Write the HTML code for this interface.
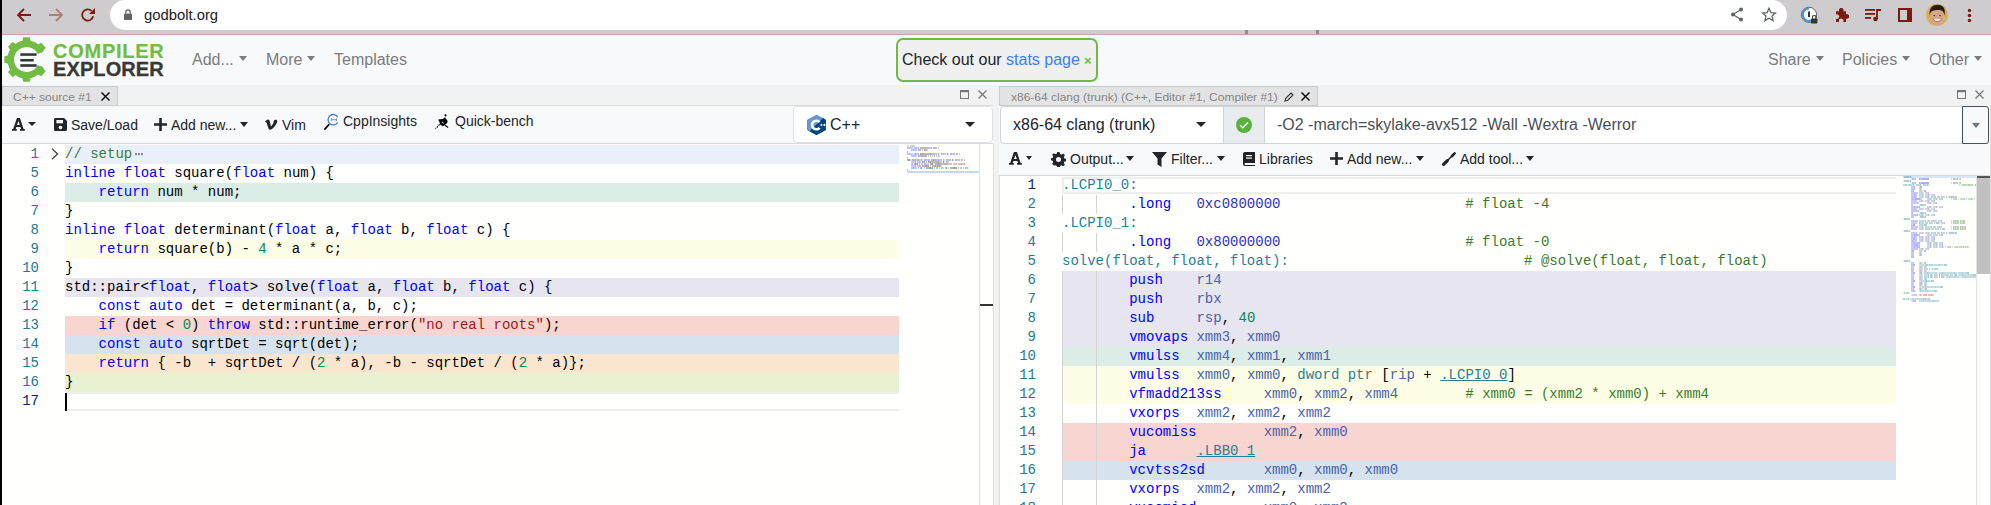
<!DOCTYPE html>
<html><head><meta charset="utf-8">
<style>
*{box-sizing:border-box}
html,body{margin:0;padding:0;width:1991px;height:505px;overflow:hidden;background:#fffffe;font-family:"Liberation Sans",sans-serif}
.a{position:absolute}
svg.a{z-index:6}
#lborder{position:absolute;left:0;top:0;width:2px;height:505px;background:#000;z-index:50}
#chrome{position:absolute;left:0;top:0;width:1991px;height:35px;background:#cecccf;border-bottom:1px solid #c9a5a5}
#pill{position:absolute;left:110px;top:0px;width:1677px;height:30px;background:#fefefe;border-radius:15px}
#url{position:absolute;left:144px;top:6.5px;font-size:14.8px;color:#202124;letter-spacing:0px}
#header{position:absolute;left:0;top:35px;width:1991px;height:50px;background:#f8f9fa}
.nav{position:absolute;top:50px;font-size:16px;color:#7b7c7d;line-height:19px}
.caret{display:inline-block;width:0;height:0;border-left:4.5px solid transparent;border-right:4.5px solid transparent;border-top:5px solid #7b7c7d;vertical-align:middle;margin-left:5px;position:relative;top:-2px}
#tabbar{position:absolute;left:0;top:85px;width:1991px;height:21px;background:#f2f2f2}
.tab{position:absolute;top:86px;height:20px;z-index:5;background:#e3e3e3;border:1px solid #cbcbcb;font-size:12px;color:#858585;line-height:21px}
.tab span{display:inline-block;transform:scaleY(.9);transform-origin:0 15px}
.tbar{position:absolute;background:#f8f9fa;border-bottom:1px solid #dadada}
.btn{position:absolute;font-size:14px;color:#212529;line-height:16px}
.code{position:absolute;background:#fffffe}
.bg{position:absolute;height:19px}
.ln{position:absolute;height:19px;font:14px/19px "Liberation Mono",monospace;color:#237893;text-align:right}
.ln.act{color:#0b216f}
.cl{position:absolute;height:19px;font:14px/19px "Liberation Mono",monospace;color:#000;white-space:pre}
.k{color:#0000ff}.h{color:#3030c0}.n{color:#098658}.s{color:#a31515}.c{color:#387d2c}.r{color:#4864aa}.l{color:#267f99}.p{color:#000}.u{color:#267f99;text-decoration:underline}
.acaret{position:absolute;width:0;height:0;border-left:4.5px solid transparent;border-right:4.5px solid transparent;border-top:5px solid #7b7c7d}
.fold{color:#888;font-size:11px;position:relative;top:-1px;margin-left:2px}
</style></head><body>
<div id="lborder"></div>
<!-- browser chrome -->
<div id="chrome">
  <svg class="a" style="left:16px;top:7px" width="16" height="16" viewBox="0 0 16 16"><path d="M15 8H2.5M8 2L2 8l6 6" fill="none" stroke="#7a1a0e" stroke-width="1.8"/></svg>
  <svg class="a" style="left:48px;top:7px" width="16" height="16" viewBox="0 0 16 16"><path d="M1 8h12.5M8 2l6 6-6 6" fill="none" stroke="#b27c75" stroke-width="1.8"/></svg>
  <svg class="a" style="left:80px;top:7px" width="16" height="16" viewBox="0 0 16 16"><path d="M13.2 9.2A5.6 5.6 0 1 1 11.6 3.9" fill="none" stroke="#7a1a0e" stroke-width="1.8"/><path d="M15 1v6H9z" fill="#7a1a0e"/></svg>
  <div id="pill"></div><div class="a" style="left:1245px;top:30px;width:3px;height:4px;background:#8e8c90"></div><div class="a" style="left:1316px;top:30px;width:3px;height:4px;background:#8e8c90"></div>
  <svg class="a" style="left:123px;top:8px" width="10" height="13" viewBox="0 0 10 13"><rect x="1" y="5.5" width="8" height="6.5" rx="0.8" fill="#5f6368"/><path d="M2.8 5.5V4a2.2 2.2 0 0 1 4.4 0v1.5" fill="none" stroke="#5f6368" stroke-width="1.3"/></svg>
  <div id="url">godbolt.org</div>
  <svg class="a" style="left:1730px;top:7px" width="14" height="15" viewBox="0 0 14 15"><circle cx="11" cy="2.5" r="2" fill="#5f6368"/><circle cx="3" cy="7.5" r="2" fill="#5f6368"/><circle cx="11" cy="12.5" r="2" fill="#5f6368"/><path d="M11 2.5L3 7.5l8 5" fill="none" stroke="#5f6368" stroke-width="1.2"/></svg>
  <svg class="a" style="left:1761px;top:7px" width="16" height="15" viewBox="0 0 24 23"><path d="M12 2l2.9 6.6 7.1.6-5.4 4.7 1.6 7-6.2-3.7-6.2 3.7 1.6-7L2 9.2l7.1-.6z" fill="none" stroke="#5f6368" stroke-width="2"/></svg>
  <svg class="a" style="left:1800px;top:6px" width="18" height="18" viewBox="0 0 18 18"><circle cx="9" cy="8.8" r="7.6" fill="#fff" stroke="#555" stroke-width="0.9"/><path d="M9 2.6A6.2 6.2 0 1 0 13.5 13" fill="none" stroke="#4a90f0" stroke-width="2"/><rect x="8" y="5.5" width="2" height="5.5" fill="#333"/><rect x="11" y="12.4" width="6.4" height="5" rx="0.9" fill="#333"/><path d="M12.4 12.4v-1.1a1.8 1.8 0 0 1 3.6 0v1.1" stroke="#333" stroke-width="1.1" fill="none"/></svg>
  <svg class="a" style="left:1834px;top:8px" width="15" height="15" viewBox="0 0 15 15"><path d="M5.2 3.2a2.3 2.3 0 1 1 4.2 0H12v3.1a2.3 2.3 0 1 1 0 4.2V14H9.1a2.3 2.3 0 1 0-3.9 0H2v-3.3a2.3 2.3 0 1 0 0-4.2V3.2z" fill="#7a1a0e"/></svg>
  <svg class="a" style="left:1864px;top:7px" width="18" height="15" viewBox="0 0 18 15"><rect x="1" y="2" width="10" height="1.8" fill="#7a1a0e"/><rect x="1" y="6" width="10" height="1.8" fill="#7a1a0e"/><rect x="1" y="10" width="6" height="1.8" fill="#7a1a0e"/><path d="M13 2v10" stroke="#7a1a0e" stroke-width="1.8"/><circle cx="11.5" cy="12" r="2.3" fill="#7a1a0e"/><path d="M13 2h4v2h-4" fill="#7a1a0e"/></svg>
  <svg class="a" style="left:1898px;top:8px" width="14" height="14" viewBox="0 0 14 14"><rect x="1" y="1" width="12" height="12" fill="none" stroke="#7a1a0e" stroke-width="2"/><rect x="9" y="1" width="5" height="12" fill="#7a1a0e"/></svg>
  <svg class="a" style="left:1926px;top:4px" width="22" height="22" viewBox="0 0 22 22"><g><rect width="22" height="22" fill="#d4b15e"/><ellipse cx="11.2" cy="13" rx="6.6" ry="8.6" fill="#d9a58a"/><path d="M3.6 11.5C2.6 3 8 0.5 12 0.8 17.5 1.2 19.8 5 18.6 11.5 17.8 8 16.6 6.6 14.6 6.2 12 5.8 8 6.4 5.4 7.4 4.4 8.4 4 10 3.6 11.5z" fill="#2b1d14"/><ellipse cx="8.3" cy="11.6" rx="0.9" ry="0.7" fill="#3a2a20"/><ellipse cx="14" cy="11.6" rx="0.9" ry="0.7" fill="#3a2a20"/><path d="M7 15.2q4.2 4.6 8.4 0z" fill="#fff"/><path d="M6.6 14.8q4.6 5.6 9.2 0" stroke="#9a5a48" stroke-width="0.8" fill="none"/></g><circle cx="11" cy="11" r="14" stroke="#cecccf" stroke-width="6" fill="none"/></svg>
  <svg class="a" style="left:1967px;top:8px" width="5" height="15" viewBox="0 0 5 15"><circle cx="2.5" cy="2.5" r="1.7" fill="#7a1a0e"/><circle cx="2.5" cy="7.5" r="1.7" fill="#7a1a0e"/><circle cx="2.5" cy="12.5" r="1.7" fill="#7a1a0e"/></svg>
</div>
<!-- header -->
<div id="header">
  <svg class="a" style="left:0.7px;top:0" width="50" height="50" viewBox="0 0 50 50"><g fill="#72bc44"><path d="M20.8 9 L22.2 2.3 H28.8 L30.2 9z" transform="rotate(0 25.5 24.5)"/><path d="M20.8 9 L22.2 2.3 H28.8 L30.2 9z" transform="rotate(50 25.5 24.5)"/><path d="M20.8 9 L22.2 2.3 H28.8 L30.2 9z" transform="rotate(130 25.5 24.5)"/><path d="M20.8 9 L22.2 2.3 H28.8 L30.2 9z" transform="rotate(180 25.5 24.5)"/><path d="M20.8 9 L22.2 2.3 H28.8 L30.2 9z" transform="rotate(227 25.5 24.5)"/><path d="M20.8 9 L22.2 2.3 H28.8 L30.2 9z" transform="rotate(270 25.5 24.5)"/><path d="M20.8 9 L22.2 2.3 H28.8 L30.2 9z" transform="rotate(313 25.5 24.5)"/></g><path d="M39.7 17.6A15.8 15.8 0 1 0 39.7 31.4" fill="none" stroke="#72bc44" stroke-width="6.6"/><rect x="19.3" y="18.3" width="16.3" height="2.5" fill="#333"/><rect x="19.3" y="24" width="13.4" height="2.5" fill="#333"/><rect x="19.3" y="29.2" width="16.3" height="2.6" fill="#333"/></svg>
  <div class="a" style="left:53px;top:7px;font:bold 20px/19px 'Liberation Sans';color:#72bc44;letter-spacing:0.75px;-webkit-text-stroke:0.2px #72bc44">COMPILER</div>
  <div class="a" style="left:53px;top:25px;font:bold 20px/19px 'Liberation Sans';color:#383838;letter-spacing:0.1px;-webkit-text-stroke:0.3px #383838">EXPLORER</div>
</div>
<div class="nav" style="left:192px">Add...<span class="caret"></span></div>
<div class="nav" style="left:266px">More<span class="caret"></span></div>
<div class="nav" style="left:334px">Templates</div>
<div class="nav" style="left:1768px">Share<span class="caret"></span></div>
<div class="nav" style="left:1842px">Policies<span class="caret"></span></div>
<div class="nav" style="left:1929px">Other<span class="caret"></span></div>
<div class="a" style="left:896px;top:38px;width:202px;height:44px;border:2px solid #6fbb45;border-radius:7px;background:#f0f0f0"></div>
<div class="a" style="left:902px;top:50px;font-size:16px;line-height:19px;color:#212529">Check out our <span style="color:#3d7ef5">stats page</span></div>
<div class="a" style="left:1084px;top:53px;font-size:13px;line-height:15px;color:#6fbb45;font-weight:bold">×</div>

<!-- tab bar -->
<div id="tabbar"></div>
<div class="a" style="left:993px;top:85px;width:6px;height:420px;background:#f2f2f2"></div>

<!-- LEFT PANE -->
<div class="tab" style="left:2px;width:116px;padding-left:10px"><span>C++ source #1</span></div>
<svg class="a" style="left:101px;top:92px" width="9" height="9" viewBox="0 0 9 9"><path d="M.5.5l8 8M8.5.5l-8 8" stroke="#000" stroke-width="1.4"/></svg>
<svg class="a" style="left:960px;top:90px" width="9" height="9" viewBox="0 0 9 9"><rect x=".5" y=".5" width="8" height="8" fill="none" stroke="#777" stroke-width="1"/><rect x="0" y="0" width="9" height="2.2" fill="#777"/></svg>
<svg class="a" style="left:978px;top:90px" width="9" height="9" viewBox="0 0 9 9"><path d="M.5.5l8 8M8.5.5l-8 8" stroke="#777" stroke-width="1.2"/></svg>

<div class="tbar" style="left:2px;top:105px;width:991px;height:39px;border-top:1px solid #dcdcdc"></div>
<svg class="a" style="left:11.5px;top:118px" width="13" height="13" viewBox="0 0 13 13"><path fill-rule="evenodd" fill="#212529" d="M0 12.8H4.8V11H3.7L4.4 9H8.4L9.1 11H8V12.8H12.8V11H11.6L7.9 0H4.9L1.2 11H0z M5 7.1L6.4 3L7.8 7.1z"/></svg>
<div class="acaret" style="left:28px;top:122px;border-top-color:#212529;border-left-width:4px;border-right-width:4px;border-top-width:4.5px"></div>
<svg class="a" style="left:54px;top:118px" width="13" height="13" viewBox="0 0 13 13"><path d="M0 1.5A1.5 1.5 0 0 1 1.5 0h8.6L13 2.9v8.6a1.5 1.5 0 0 1-1.5 1.5h-10A1.5 1.5 0 0 1 0 11.5z" fill="#212529"/><rect x="2.4" y="2" width="6.6" height="3.3" fill="#f8f9fa"/><circle cx="6.5" cy="9.5" r="1.8" fill="#f8f9fa"/></svg>
<div class="btn" style="left:71px;top:117px">Save/Load</div>
<svg class="a" style="left:154px;top:118px" width="13" height="13" viewBox="0 0 13 13"><path d="M6.5 0v13M0 6.5h13" stroke="#212529" stroke-width="2.6"/></svg>
<div class="btn" style="left:171px;top:117px">Add new...<span class="caret" style="border-top-color:#212529;margin-left:4px"></span></div>
<svg class="a" style="left:265px;top:119px" width="13" height="11" viewBox="0 0 13 11"><path d="M0 2.6C1 1.6 2 0.6 3.2 0.6 4.3 0.6 4.6 1.6 4.9 3L6 7.6C7.3 6 9.2 3.6 8.6 2.2 9.6 0.2 12.6 0.2 12.2 2.6 11.6 6 7.4 10.8 5 10.8 3.7 10.8 3.2 9 2.6 6.8 2.1 5 1.8 3.2 1.1 3.4z" fill="#212529"/></svg>
<div class="btn" style="left:282px;top:117px">Vim</div>
<svg class="a" style="left:323px;top:113px" width="17" height="18" viewBox="0 0 17 18"><path d="M14.8 4.2A5.2 5.2 0 1 0 14.8 9.2" fill="none" stroke="#3a7cc4" stroke-width="1.3"/><path d="M8 6.7h6M8.6 5.2v3M13.4 5.2v3" stroke="#888" stroke-width="0.9"/><path d="M6.2 11.2L1.4 16.6" stroke="#000" stroke-width="1.7"/></svg>
<div class="btn" style="left:343px;top:113px">CppInsights</div>
<svg class="a" style="left:435px;top:114px" width="15" height="16" viewBox="0 0 15 16"><circle cx="10.5" cy="1.3" r="1.1" fill="#000"/><path d="M3.2 5.6L7.6 5C9 4.3 10 3.5 10.3 2.8 10 3.8 10.2 4.3 11.6 5.4 13 6.6 13 8.6 11 10L8 12.2 5.2 10.8C4.8 9 4.2 7.2 3.2 5.6z" fill="#000"/><path d="M4.6 10.4L0.6 15" stroke="#000" stroke-width="1.1" stroke-dasharray="1.6 1.1"/><path d="M9.8 11.2L13.2 13.4" stroke="#000" stroke-width="1.2"/><path d="M8.4 9.6a1.5 1.5 0 0 0-1.6-1.4" stroke="#fff" stroke-width="0.9" fill="none"/></svg>
<div class="btn" style="left:455px;top:113px">Quick-bench</div>

<div class="a" style="left:793px;top:106px;width:200px;height:37px;background:#fff;border:1px solid #dee2e6;border-radius:4px"></div>
<svg class="a" style="left:806.5px;top:115px" width="19" height="20" viewBox="0 0 19 20"><path d="M9.5 0L18.8 5.1v9.8L9.5 20 0.2 14.9V5.1z" fill="#00599c"/><path d="M9.5 0L0.2 5.1v9.8l2.6 1.4L16.2 3z" fill="#659ad2"/><path d="M0.2 14.9L9.5 20l9.3-5.1V5.1L16.2 3 2.8 16.3z" fill="#004482"/><path d="M12.6 7.2A4.3 4.3 0 1 0 12.6 12.8" fill="none" stroke="#fff" stroke-width="2.6"/><path d="M13.2 10h2.4M14.4 8.8v2.4M16.2 10h2.4M17.4 8.8v2.4" stroke="#fff" stroke-width="0.9"/></svg>
<div class="a" style="left:830px;top:116px;font-size:16px;line-height:18px;color:#212529">C++</div>
<div class="acaret" style="left:965px;top:122px;border-top-color:#212529;border-left-width:5px;border-right-width:5px;border-top-width:5px"></div>

<div class="code" style="left:2px;top:144px;width:991px;height:361px"></div>
<div class="bg" style="top:145px;left:65px;width:834px;background:#e9f0fb"></div>
<div class="ln" style="top:145px;left:2px;width:37px">1</div>
<div class="cl" style="top:145px;left:65px"><span class="c">// setup</span></div>
<div class="ln" style="top:164px;left:2px;width:37px">5</div>
<div class="cl" style="top:164px;left:65px"><span class="k">inline</span> <span class="k">float</span> square(<span class="k">float</span> num) {</div>
<div class="bg" style="top:183px;left:65px;width:834px;background:#dcede8"></div>
<div class="ln" style="top:183px;left:2px;width:37px">6</div>
<div class="cl" style="top:183px;left:65px">    <span class="k">return</span> num * num;</div>
<div class="ln" style="top:202px;left:2px;width:37px">7</div>
<div class="cl" style="top:202px;left:65px">}</div>
<div class="ln" style="top:221px;left:2px;width:37px">8</div>
<div class="cl" style="top:221px;left:65px"><span class="k">inline</span> <span class="k">float</span> determinant(<span class="k">float</span> a, <span class="k">float</span> b, <span class="k">float</span> c) {</div>
<div class="bg" style="top:240px;left:65px;width:834px;background:#fefde6"></div>
<div class="ln" style="top:240px;left:2px;width:37px">9</div>
<div class="cl" style="top:240px;left:65px">    <span class="k">return</span> square(b) - <span class="n">4</span> * a * c;</div>
<div class="ln" style="top:259px;left:2px;width:37px">10</div>
<div class="cl" style="top:259px;left:65px">}</div>
<div class="bg" style="top:278px;left:65px;width:834px;background:#e6e5f0"></div>
<div class="ln" style="top:278px;left:2px;width:37px">11</div>
<div class="cl" style="top:278px;left:65px">std::pair&lt;<span class="k">float</span>, <span class="k">float</span>&gt; solve(<span class="k">float</span> a, <span class="k">float</span> b, <span class="k">float</span> c) {</div>
<div class="ln" style="top:297px;left:2px;width:37px">12</div>
<div class="cl" style="top:297px;left:65px">    <span class="k">const</span> <span class="k">auto</span> det = determinant(a, b, c);</div>
<div class="bg" style="top:316px;left:65px;width:834px;background:#f8d5d0"></div>
<div class="ln" style="top:316px;left:2px;width:37px">13</div>
<div class="cl" style="top:316px;left:65px">    <span class="k">if</span> (det &lt; <span class="n">0</span>) <span class="k">throw</span> std::runtime_error(<span class="s">&quot;no real roots&quot;</span>);</div>
<div class="bg" style="top:335px;left:65px;width:834px;background:#d6e2ee"></div>
<div class="ln" style="top:335px;left:2px;width:37px">14</div>
<div class="cl" style="top:335px;left:65px">    <span class="k">const</span> <span class="k">auto</span> sqrtDet = sqrt(det);</div>
<div class="bg" style="top:354px;left:65px;width:834px;background:#fae5cf"></div>
<div class="ln" style="top:354px;left:2px;width:37px">15</div>
<div class="cl" style="top:354px;left:65px">    <span class="k">return</span> { -b  + sqrtDet / (<span class="n">2</span> * a), -b - sqrtDet / (<span class="n">2</span> * a)};</div>
<div class="bg" style="top:373px;left:65px;width:834px;background:#e8f2d3"></div>
<div class="ln" style="top:373px;left:2px;width:37px">16</div>
<div class="cl" style="top:373px;left:65px">}</div>
<div class="ln act" style="top:392px;left:2px;width:37px">17</div>
<div class="cl" style="top:392px;left:65px"></div>
<svg class="a" style="left:51px;top:148px" width="8" height="12" viewBox="0 0 8 12"><path d="M1 .8L6.6 6 1 11.2" fill="none" stroke="#424242" stroke-width="1.3"/></svg><svg class="a" style="left:135px;top:152.5px" width="8" height="3"><rect x="0" y="0" width="2" height="2.2" fill="#8a8590"/><rect x="3" y="0" width="2" height="2.2" fill="#8a8590"/><rect x="6" y="0" width="2" height="2.2" fill="#8a8590"/></svg>
<div class="a" style="left:65px;top:392px;width:834px;height:19px;border-top:2px solid #eeeeee;border-bottom:2px solid #eeeeee"></div>
<div class="a" style="left:65px;top:393px;width:2px;height:18px;background:#000"></div>
<!-- left minimap & scrollbar -->
<div class="a" style="left:979px;top:144px;width:1px;height:361px;background:#e3e3e3"></div>
<div class="a" style="left:993px;top:144px;width:1px;height:361px;background:#dcdcdc"></div>
<div class="a" style="left:980px;top:304px;width:13px;height:2px;background:#333"></div>
<svg class="a" style="left:907px;top:145px" width="72" height="30"><path d="M0 0.4h2v1.1h-2z" fill="#387d2c" fill-opacity="0.45"/><path d="M3 0.4h2v1.1h-2zM6 0.4h2v1.1h-2z" fill="#387d2c" fill-opacity="0.55"/><path d="M5 0.4h1v1.1h-1z" fill="#387d2c" fill-opacity="0.75"/><path d="M0 2.4h2v1.1h-2zM3 2.4h3v1.1h-3zM9 2.4h2v1.1h-2zM22 2.4h2v1.1h-2zM4 4.4h2v1.1h-2zM7 4.4h3v1.1h-3zM0 8.4h2v1.1h-2zM3 8.4h3v1.1h-3zM9 8.4h2v1.1h-2zM27 8.4h2v1.1h-2zM36 8.4h2v1.1h-2zM45 8.4h2v1.1h-2zM4 10.4h2v1.1h-2zM7 10.4h3v1.1h-3zM12 14.4h2v1.1h-2zM19 14.4h2v1.1h-2zM32 14.4h2v1.1h-2zM41 14.4h2v1.1h-2zM50 14.4h2v1.1h-2zM4 16.4h4v1.1h-4zM10 16.4h2v1.1h-2zM13 16.4h1v1.1h-1zM4 18.4h1v1.1h-1zM19 18.4h3v1.1h-3zM4 20.4h4v1.1h-4zM10 20.4h2v1.1h-2zM13 20.4h1v1.1h-1zM4 22.4h2v1.1h-2zM7 22.4h3v1.1h-3z" fill="#0000ff" fill-opacity="0.44"/><path d="M2 2.4h1v1.1h-1zM7 2.4h2v1.1h-2zM11 2.4h1v1.1h-1zM20 2.4h2v1.1h-2zM24 2.4h1v1.1h-1zM6 4.4h1v1.1h-1zM2 8.4h1v1.1h-1zM7 8.4h2v1.1h-2zM11 8.4h1v1.1h-1zM25 8.4h2v1.1h-2zM29 8.4h1v1.1h-1zM34 8.4h2v1.1h-2zM38 8.4h1v1.1h-1zM43 8.4h2v1.1h-2zM47 8.4h1v1.1h-1zM6 10.4h1v1.1h-1zM10 14.4h2v1.1h-2zM14 14.4h1v1.1h-1zM17 14.4h2v1.1h-2zM21 14.4h1v1.1h-1zM30 14.4h2v1.1h-2zM34 14.4h1v1.1h-1zM39 14.4h2v1.1h-2zM43 14.4h1v1.1h-1zM48 14.4h2v1.1h-2zM52 14.4h1v1.1h-1zM8 16.4h1v1.1h-1zM12 16.4h1v1.1h-1zM5 18.4h1v1.1h-1zM17 18.4h2v1.1h-2zM8 20.4h1v1.1h-1zM12 20.4h1v1.1h-1zM6 22.4h1v1.1h-1z" fill="#0000ff" fill-opacity="0.60"/><path d="M13 2.4h6v1.1h-6zM26 2.4h3v1.1h-3zM11 4.4h3v1.1h-3zM17 4.4h3v1.1h-3zM14 8.4h1v1.1h-1zM16 8.4h7v1.1h-7zM31 8.4h1v1.1h-1zM49 8.4h1v1.1h-1zM11 10.4h6v1.1h-6zM27 10.4h1v1.1h-1zM31 10.4h1v1.1h-1zM0 14.4h1v1.1h-1zM5 14.4h4v1.1h-4zM24 14.4h2v1.1h-2zM27 14.4h2v1.1h-2zM36 14.4h1v1.1h-1zM54 14.4h1v1.1h-1zM16 16.4h1v1.1h-1zM22 16.4h1v1.1h-1zM24 16.4h7v1.1h-7zM33 16.4h1v1.1h-1zM39 16.4h1v1.1h-1zM9 18.4h1v1.1h-1zM23 18.4h1v1.1h-1zM28 18.4h3v1.1h-3zM32 18.4h3v1.1h-3zM36 18.4h5v1.1h-5zM15 20.4h3v1.1h-3zM20 20.4h1v1.1h-1zM25 20.4h3v1.1h-3zM31 20.4h1v1.1h-1zM19 22.4h3v1.1h-3zM24 22.4h1v1.1h-1zM34 22.4h1v1.1h-1zM43 22.4h3v1.1h-3zM48 22.4h1v1.1h-1zM58 22.4h1v1.1h-1z" fill="#000" fill-opacity="0.55"/><path d="M19 2.4h1v1.1h-1zM29 2.4h1v1.1h-1zM31 2.4h1v1.1h-1zM15 4.4h1v1.1h-1zM0 6.4h1v1.1h-1zM24 8.4h1v1.1h-1zM50 8.4h1v1.1h-1zM52 8.4h1v1.1h-1zM17 10.4h1v1.1h-1zM19 10.4h1v1.1h-1zM21 10.4h1v1.1h-1zM25 10.4h1v1.1h-1zM29 10.4h1v1.1h-1zM0 12.4h1v1.1h-1zM9 14.4h1v1.1h-1zM22 14.4h1v1.1h-1zM29 14.4h1v1.1h-1zM55 14.4h1v1.1h-1zM57 14.4h1v1.1h-1zM19 16.4h1v1.1h-1zM32 16.4h1v1.1h-1zM40 16.4h1v1.1h-1zM7 18.4h1v1.1h-1zM12 18.4h1v1.1h-1zM15 18.4h1v1.1h-1zM35 18.4h1v1.1h-1zM41 18.4h1v1.1h-1zM57 18.4h1v1.1h-1zM23 20.4h1v1.1h-1zM29 20.4h1v1.1h-1zM33 20.4h1v1.1h-1zM11 22.4h1v1.1h-1zM13 22.4h1v1.1h-1zM17 22.4h1v1.1h-1zM27 22.4h1v1.1h-1zM29 22.4h1v1.1h-1zM32 22.4h1v1.1h-1zM35 22.4h1v1.1h-1zM38 22.4h1v1.1h-1zM41 22.4h1v1.1h-1zM51 22.4h1v1.1h-1zM53 22.4h1v1.1h-1zM56 22.4h1v1.1h-1zM59 22.4h2v1.1h-2zM0 24.4h1v1.1h-1z" fill="#000" fill-opacity="0.45"/><path d="M20 4.4h1v1.1h-1zM32 8.4h1v1.1h-1zM41 8.4h1v1.1h-1zM32 10.4h1v1.1h-1zM3 14.4h2v1.1h-2zM15 14.4h1v1.1h-1zM37 14.4h1v1.1h-1zM46 14.4h1v1.1h-1zM34 16.4h1v1.1h-1zM37 16.4h1v1.1h-1zM41 16.4h1v1.1h-1zM26 18.4h2v1.1h-2zM58 18.4h1v1.1h-1zM34 20.4h1v1.1h-1zM36 22.4h1v1.1h-1zM61 22.4h1v1.1h-1z" fill="#000" fill-opacity="0.25"/><path d="M13 8.4h1v1.1h-1zM15 8.4h1v1.1h-1zM23 8.4h1v1.1h-1zM40 8.4h1v1.1h-1zM18 10.4h1v1.1h-1zM1 14.4h2v1.1h-2zM26 14.4h1v1.1h-1zM45 14.4h1v1.1h-1zM15 16.4h1v1.1h-1zM17 16.4h1v1.1h-1zM21 16.4h1v1.1h-1zM23 16.4h1v1.1h-1zM31 16.4h1v1.1h-1zM36 16.4h1v1.1h-1zM8 18.4h1v1.1h-1zM10 18.4h1v1.1h-1zM24 18.4h2v1.1h-2zM31 18.4h1v1.1h-1zM18 20.4h2v1.1h-2zM21 20.4h1v1.1h-1zM28 20.4h1v1.1h-1zM30 20.4h1v1.1h-1zM32 20.4h1v1.1h-1zM14 22.4h1v1.1h-1zM22 22.4h2v1.1h-2zM25 22.4h1v1.1h-1zM39 22.4h1v1.1h-1zM46 22.4h2v1.1h-2zM49 22.4h1v1.1h-1z" fill="#000" fill-opacity="0.75"/><path d="M23 10.4h1v1.1h-1zM14 18.4h1v1.1h-1zM30 22.4h1v1.1h-1zM54 22.4h1v1.1h-1z" fill="#098658" fill-opacity="0.75"/><path d="M42 18.4h1v1.1h-1zM56 18.4h1v1.1h-1z" fill="#a31515" fill-opacity="0.45"/><path d="M43 18.4h2v1.1h-2zM46 18.4h3v1.1h-3zM51 18.4h3v1.1h-3zM55 18.4h1v1.1h-1z" fill="#a31515" fill-opacity="0.55"/><path d="M49 18.4h1v1.1h-1zM54 18.4h1v1.1h-1z" fill="#a31515" fill-opacity="0.75"/></svg>
<div class="a" style="left:907px;top:171px;width:72px;height:2px;background:#c5d8f5"></div>

<!-- RIGHT PANE -->
<div class="tab" style="left:999px;width:319px;padding-left:11px"><span>x86-64 clang (trunk) (C++, Editor #1, Compiler #1)</span></div>
<svg class="a" style="left:1284px;top:92px" width="10" height="10" viewBox="0 0 10 10"><path d="M1 9l.5-2.5L7 1l2 2-5.5 5.5z" fill="none" stroke="#333" stroke-width="1.1"/></svg>
<svg class="a" style="left:1301px;top:92px" width="9" height="9" viewBox="0 0 9 9"><path d="M.5.5l8 8M8.5.5l-8 8" stroke="#000" stroke-width="1.4"/></svg>
<svg class="a" style="left:1957px;top:90px" width="9" height="9" viewBox="0 0 9 9"><rect x=".5" y=".5" width="8" height="8" fill="none" stroke="#777" stroke-width="1"/><rect x="0" y="0" width="9" height="2.2" fill="#777"/></svg>
<svg class="a" style="left:1975px;top:90px" width="9" height="9" viewBox="0 0 9 9"><path d="M.5.5l8 8M8.5.5l-8 8" stroke="#777" stroke-width="1.2"/></svg>

<div class="tbar" style="left:999px;top:106px;width:992px;height:70px;border-bottom:1px solid #dadada"></div>
<div class="a" style="left:1000px;top:106px;width:224px;height:38px;background:#fff;border:1px solid #ced4da;border-radius:4px 0 0 4px"></div>
<div class="a" style="left:1013px;top:116px;font-size:16px;line-height:18px;color:#212529">x86-64 clang (trunk)</div>
<div class="acaret" style="left:1196px;top:122px;border-top-color:#212529;border-left-width:5px;border-right-width:5px;border-top-width:5px"></div>
<div class="a" style="left:1223px;top:106px;width:42px;height:38px;background:#e9ecef;border:1px solid #ced4da"></div>
<svg class="a" style="left:1236px;top:117px" width="16" height="16" viewBox="0 0 16 16"><circle cx="8" cy="8" r="8" fill="#56b33c"/><path d="M4.2 8.3l2.6 2.4 5.2-5.2" fill="none" stroke="#fff" stroke-width="1.5"/></svg>
<div class="a" style="left:1265px;top:106px;width:698px;height:38px;background:#fff;border:1px solid #ced4da;border-left:none"></div>
<div class="a" style="left:1277px;top:116px;font-size:16px;line-height:18px;color:#495057">-O2 -march=skylake-avx512 -Wall -Wextra -Werror</div>
<div class="a" style="left:1962px;top:106px;width:27px;height:38px;background:#f8f9fa;border:1px solid #495057;border-radius:0 3px 3px 0"></div>
<div class="acaret" style="left:1971.5px;top:122.5px;border-top-color:#6c757d;border-left-width:4.5px;border-right-width:4.5px;border-top-width:5px"></div>

<svg class="a" style="left:1008.5px;top:152px" width="13" height="13" viewBox="0 0 13 13"><path fill-rule="evenodd" fill="#212529" d="M0 12.8H4.8V11H3.7L4.4 9H8.4L9.1 11H8V12.8H12.8V11H11.6L7.9 0H4.9L1.2 11H0z M5 7.1L6.4 3L7.8 7.1z"/></svg>
<div class="acaret" style="left:1025.5px;top:156px;border-top-color:#212529;border-left-width:3.8px;border-right-width:3.8px;border-top-width:4.5px"></div>
<svg class="a" style="left:1051px;top:152px" width="15" height="15" viewBox="0 0 16 16"><path fill="#212529" d="M8 0l1.3.2.4 2a6 6 0 0 1 1.6.7l1.7-1.2 1.8 1.8-1.2 1.7a6 6 0 0 1 .7 1.6l2 .4v2.6l-2 .4a6 6 0 0 1-.7 1.6l1.2 1.7-1.8 1.8-1.7-1.2a6 6 0 0 1-1.6.7l-.4 2H6.7l-.4-2a6 6 0 0 1-1.6-.7L3 14.3 1.2 12.5l1.2-1.7a6 6 0 0 1-.7-1.6l-2-.4V6.7l2-.4a6 6 0 0 1 .7-1.6L1.2 3 3 1.2l1.7 1.2a6 6 0 0 1 1.6-.7l.4-2zM8 5.3a2.7 2.7 0 1 0 0 5.4 2.7 2.7 0 0 0 0-5.4z"/></svg>
<div class="btn" style="left:1070px;top:151px">Output...<span class="caret" style="border-top-color:#212529;margin-left:2.5px"></span></div>
<svg class="a" style="left:1152px;top:152px" width="15" height="15" viewBox="0 0 15 15"><path d="M0 0h15l-5.5 6.5V15l-4-2.5V6.5z" fill="#212529"/></svg>
<div class="btn" style="left:1171px;top:151px">Filter...<span class="caret" style="border-top-color:#212529;margin-left:3.5px"></span></div>
<svg class="a" style="left:1243px;top:152px" width="12" height="14" viewBox="0 0 12 14"><path d="M2 0h10v11H2.5a1 1 0 0 0 0 2H12v1H2a2 2 0 0 1-2-2V2a2 2 0 0 1 2-2z" fill="#212529"/><rect x="3" y="3" width="6" height="1.2" fill="#f8f9fa"/><rect x="3" y="5.5" width="6" height="1.2" fill="#f8f9fa"/></svg>
<div class="btn" style="left:1259px;top:151px">Libraries</div>
<svg class="a" style="left:1330px;top:152px" width="13" height="13" viewBox="0 0 13 13"><path d="M6.5 0v13M0 6.5h13" stroke="#212529" stroke-width="2.6"/></svg>
<div class="btn" style="left:1347px;top:151px">Add new...<span class="caret" style="border-top-color:#212529;margin-left:4px"></span></div>
<svg class="a" style="left:1442px;top:152px" width="14" height="14" viewBox="0 0 14 14"><path d="M1.6 12.4L5.2 8.8" stroke="#212529" stroke-width="3.2" stroke-linecap="round"/><path d="M5 9L10.5 3.5" stroke="#212529" stroke-width="1.6"/><path d="M10 4L12.6 1.4" stroke="#212529" stroke-width="2.6" stroke-linecap="round"/></svg>
<div class="btn" style="left:1460px;top:151px">Add tool...<span class="caret" style="border-top-color:#212529;margin-left:3px"></span></div>

<div class="code" style="left:999px;top:176px;width:992px;height:329px"></div>
<div class="a" style="left:999px;top:176px;width:1px;height:329px;background:#dadada"></div>
<div class="ln act" style="top:176px;left:999px;width:37px">1</div>
<div class="cl" style="top:176px;left:1062px"><span class="l">.LCPI0_0:</span></div>
<div class="ln" style="top:195px;left:999px;width:37px">2</div>
<div class="cl" style="top:195px;left:1062px">        <span class="k">.long</span>   <span class="h">0xc0800000</span>                      <span class="c"># float -4</span></div>
<div class="ln" style="top:214px;left:999px;width:37px">3</div>
<div class="cl" style="top:214px;left:1062px"><span class="l">.LCPI0_1:</span></div>
<div class="ln" style="top:233px;left:999px;width:37px">4</div>
<div class="cl" style="top:233px;left:1062px">        <span class="k">.long</span>   <span class="h">0x80000000</span>                      <span class="c"># float -0</span></div>
<div class="ln" style="top:252px;left:999px;width:37px">5</div>
<div class="cl" style="top:252px;left:1062px"><span class="l">solve(float, float, float):</span>                            <span class="c"># @solve(float, float, float)</span></div>
<div class="bg" style="top:271px;left:1062px;width:834px;background:#e6e5f0"></div>
<div class="ln" style="top:271px;left:999px;width:37px">6</div>
<div class="cl" style="top:271px;left:1062px">        <span class="k">push</span>    <span class="r">r14</span></div>
<div class="bg" style="top:290px;left:1062px;width:834px;background:#e6e5f0"></div>
<div class="ln" style="top:290px;left:999px;width:37px">7</div>
<div class="cl" style="top:290px;left:1062px">        <span class="k">push</span>    <span class="r">rbx</span></div>
<div class="bg" style="top:309px;left:1062px;width:834px;background:#e6e5f0"></div>
<div class="ln" style="top:309px;left:999px;width:37px">8</div>
<div class="cl" style="top:309px;left:1062px">        <span class="k">sub</span>     <span class="r">rsp</span><span class="p">, </span><span class="n">40</span></div>
<div class="bg" style="top:328px;left:1062px;width:834px;background:#e6e5f0"></div>
<div class="ln" style="top:328px;left:999px;width:37px">9</div>
<div class="cl" style="top:328px;left:1062px">        <span class="k">vmovaps</span> <span class="r">xmm3</span><span class="p">, </span><span class="r">xmm0</span></div>
<div class="bg" style="top:347px;left:1062px;width:834px;background:#dcede8"></div>
<div class="ln" style="top:347px;left:999px;width:37px">10</div>
<div class="cl" style="top:347px;left:1062px">        <span class="k">vmulss</span>  <span class="r">xmm4</span><span class="p">, </span><span class="r">xmm1</span><span class="p">, </span><span class="r">xmm1</span></div>
<div class="bg" style="top:366px;left:1062px;width:834px;background:#fefde6"></div>
<div class="ln" style="top:366px;left:999px;width:37px">11</div>
<div class="cl" style="top:366px;left:1062px">        <span class="k">vmulss</span>  <span class="r">xmm0</span><span class="p">, </span><span class="r">xmm0</span><span class="p">, </span><span class="l">dword ptr</span><span class="p"> [</span><span class="r">rip</span><span class="p"> + </span><span class="u">.LCPI0_0</span><span class="p">]</span></div>
<div class="bg" style="top:385px;left:1062px;width:834px;background:#fefde6"></div>
<div class="ln" style="top:385px;left:999px;width:37px">12</div>
<div class="cl" style="top:385px;left:1062px">        <span class="k">vfmadd213ss</span>     <span class="r">xmm0</span><span class="p">, </span><span class="r">xmm2</span><span class="p">, </span><span class="r">xmm4</span>        <span class="c"># xmm0 = (xmm2 * xmm0) + xmm4</span></div>
<div class="ln" style="top:404px;left:999px;width:37px">13</div>
<div class="cl" style="top:404px;left:1062px">        <span class="k">vxorps</span>  <span class="r">xmm2</span><span class="p">, </span><span class="r">xmm2</span><span class="p">, </span><span class="r">xmm2</span></div>
<div class="bg" style="top:423px;left:1062px;width:834px;background:#f8d5d0"></div>
<div class="ln" style="top:423px;left:999px;width:37px">14</div>
<div class="cl" style="top:423px;left:1062px">        <span class="k">vucomiss</span>        <span class="r">xmm2</span><span class="p">, </span><span class="r">xmm0</span></div>
<div class="bg" style="top:442px;left:1062px;width:834px;background:#f8d5d0"></div>
<div class="ln" style="top:442px;left:999px;width:37px">15</div>
<div class="cl" style="top:442px;left:1062px">        <span class="k">ja</span>      <span class="u">.LBB0_1</span></div>
<div class="bg" style="top:461px;left:1062px;width:834px;background:#d6e2ee"></div>
<div class="ln" style="top:461px;left:999px;width:37px">16</div>
<div class="cl" style="top:461px;left:1062px">        <span class="k">vcvtss2sd</span>       <span class="r">xmm0</span><span class="p">, </span><span class="r">xmm0</span><span class="p">, </span><span class="r">xmm0</span></div>
<div class="ln" style="top:480px;left:999px;width:37px">17</div>
<div class="cl" style="top:480px;left:1062px">        <span class="k">vxorps</span>  <span class="r">xmm2</span><span class="p">, </span><span class="r">xmm2</span><span class="p">, </span><span class="r">xmm2</span></div>
<div class="ln" style="top:499px;left:999px;width:37px">18</div>
<div class="cl" style="top:499px;left:1062px">        <span class="k">vucomisd</span>        <span class="r">xmm0</span><span class="p">, </span><span class="r">xmm2</span></div>

<div class="a" style="left:1062px;top:177px;width:834px;height:17px;border:2px solid #eeeeee;border-right:none"></div>
<!-- indent guides -->
<div class="a" style="left:1062px;top:195px;width:1px;height:19px;background:#d3d3d3"></div><div class="a" style="left:1096px;top:195px;width:1px;height:19px;background:#d3d3d3"></div>
<div class="a" style="left:1062px;top:233px;width:1px;height:19px;background:#d3d3d3"></div><div class="a" style="left:1096px;top:233px;width:1px;height:19px;background:#d3d3d3"></div>
<div class="a" style="left:1062px;top:271px;width:1px;height:19px;background:#d3d3d3"></div><div class="a" style="left:1096px;top:271px;width:1px;height:19px;background:#d3d3d3"></div>
<div class="a" style="left:1062px;top:290px;width:1px;height:19px;background:#d3d3d3"></div><div class="a" style="left:1096px;top:290px;width:1px;height:19px;background:#d3d3d3"></div>
<div class="a" style="left:1062px;top:309px;width:1px;height:19px;background:#d3d3d3"></div><div class="a" style="left:1096px;top:309px;width:1px;height:19px;background:#d3d3d3"></div>
<div class="a" style="left:1062px;top:328px;width:1px;height:19px;background:#d3d3d3"></div><div class="a" style="left:1096px;top:328px;width:1px;height:19px;background:#d3d3d3"></div>
<div class="a" style="left:1062px;top:347px;width:1px;height:19px;background:#d3d3d3"></div><div class="a" style="left:1096px;top:347px;width:1px;height:19px;background:#d3d3d3"></div>
<div class="a" style="left:1062px;top:366px;width:1px;height:19px;background:#d3d3d3"></div><div class="a" style="left:1096px;top:366px;width:1px;height:19px;background:#d3d3d3"></div>
<div class="a" style="left:1062px;top:385px;width:1px;height:19px;background:#d3d3d3"></div><div class="a" style="left:1096px;top:385px;width:1px;height:19px;background:#d3d3d3"></div>
<div class="a" style="left:1062px;top:404px;width:1px;height:19px;background:#d3d3d3"></div><div class="a" style="left:1096px;top:404px;width:1px;height:19px;background:#d3d3d3"></div>
<div class="a" style="left:1062px;top:423px;width:1px;height:19px;background:#d3d3d3"></div><div class="a" style="left:1096px;top:423px;width:1px;height:19px;background:#d3d3d3"></div>
<div class="a" style="left:1062px;top:442px;width:1px;height:19px;background:#d3d3d3"></div><div class="a" style="left:1096px;top:442px;width:1px;height:19px;background:#d3d3d3"></div>
<div class="a" style="left:1062px;top:461px;width:1px;height:19px;background:#d3d3d3"></div><div class="a" style="left:1096px;top:461px;width:1px;height:19px;background:#d3d3d3"></div>
<div class="a" style="left:1062px;top:480px;width:1px;height:19px;background:#d3d3d3"></div><div class="a" style="left:1096px;top:480px;width:1px;height:19px;background:#d3d3d3"></div>
<div class="a" style="left:1062px;top:499px;width:1px;height:19px;background:#d3d3d3"></div><div class="a" style="left:1096px;top:499px;width:1px;height:19px;background:#d3d3d3"></div>

<!-- right minimap & scrollbar -->
<div class="a" style="left:1976px;top:176px;width:1px;height:329px;background:#e3e3e3"></div><div class="a" style="left:1977px;top:176px;width:13px;height:98px;background:#c1c1c1;border-top:2px solid #555"></div>
<div class="a" style="left:1990px;top:106px;width:1px;height:399px;background:#dcdcdc"></div>
<svg class="a" style="left:1903px;top:176px" width="73" height="128"><path d="M0 0.4h1v1.1h-1zM8 0.4h1v1.1h-1zM0 4.4h1v1.1h-1zM8 4.4h1v1.1h-1zM11 8.4h1v1.1h-1zM18 8.4h1v1.1h-1zM26 8.4h1v1.1h-1zM45 20.4h1v1.1h-1zM16 28.4h1v1.1h-1zM16 36.4h1v1.1h-1zM16 40.4h1v1.1h-1zM0 42.4h1v1.1h-1zM7 42.4h1v1.1h-1zM0 54.4h1v1.1h-1zM7 54.4h1v1.1h-1zM45 56.4h1v1.1h-1zM0 84.4h1v1.1h-1zM7 84.4h1v1.1h-1zM28 92.4h1v1.1h-1zM30 92.4h1v1.1h-1zM19 96.4h2v1.1h-2zM34 96.4h2v1.1h-2zM54 98.4h2v1.1h-2zM41 100.4h2v1.1h-2zM56 100.4h2v1.1h-2zM0 116.4h1v1.1h-1zM2 116.4h1v1.1h-1zM6 116.4h1v1.1h-1zM2 122.4h1v1.1h-1zM6 122.4h1v1.1h-1zM27 122.4h1v1.1h-1z" fill="#267f99" fill-opacity="0.25"/><path d="M1 0.4h5v1.1h-5zM7 0.4h1v1.1h-1zM1 4.4h5v1.1h-5zM7 4.4h1v1.1h-1zM2 8.4h1v1.1h-1zM6 8.4h2v1.1h-2zM10 8.4h1v1.1h-1zM13 8.4h2v1.1h-2zM17 8.4h1v1.1h-1zM20 8.4h2v1.1h-2zM24 8.4h1v1.1h-1zM28 20.4h1v1.1h-1zM32 20.4h1v1.1h-1zM35 20.4h1v1.1h-1zM46 20.4h5v1.1h-5zM52 20.4h1v1.1h-1zM17 28.4h4v1.1h-4zM22 28.4h1v1.1h-1zM17 36.4h4v1.1h-4zM22 36.4h1v1.1h-1zM17 40.4h4v1.1h-4zM22 40.4h1v1.1h-1zM1 42.4h4v1.1h-4zM6 42.4h1v1.1h-1zM22 44.4h1v1.1h-1zM25 44.4h1v1.1h-1zM16 46.4h1v1.1h-1zM20 46.4h1v1.1h-1zM23 46.4h1v1.1h-1zM19 48.4h1v1.1h-1zM21 48.4h3v1.1h-3zM28 50.4h1v1.1h-1zM31 50.4h1v1.1h-1zM22 52.4h1v1.1h-1zM26 52.4h1v1.1h-1zM29 52.4h1v1.1h-1zM1 54.4h4v1.1h-4zM6 54.4h1v1.1h-1zM28 56.4h1v1.1h-1zM32 56.4h1v1.1h-1zM35 56.4h1v1.1h-1zM46 56.4h5v1.1h-5zM52 56.4h1v1.1h-1zM1 84.4h4v1.1h-4zM6 84.4h1v1.1h-1zM23 88.4h2v1.1h-2zM28 88.4h1v1.1h-1zM36 88.4h1v1.1h-1zM41 88.4h3v1.1h-3zM29 92.4h1v1.1h-1zM32 92.4h1v1.1h-1zM17 96.4h2v1.1h-2zM24 96.4h1v1.1h-1zM39 96.4h1v1.1h-1zM51 96.4h1v1.1h-1zM59 96.4h1v1.1h-1zM63 96.4h3v1.1h-3zM25 98.4h1v1.1h-1zM28 98.4h1v1.1h-1zM38 98.4h1v1.1h-1zM44 98.4h1v1.1h-1zM47 98.4h1v1.1h-1zM52 98.4h2v1.1h-2zM59 98.4h1v1.1h-1zM70 98.4h3v1.1h-3zM25 100.4h1v1.1h-1zM28 100.4h1v1.1h-1zM39 100.4h2v1.1h-2zM46 100.4h1v1.1h-1zM62 100.4h1v1.1h-1zM22 104.4h2v1.1h-2zM28 104.4h3v1.1h-3zM22 110.4h1v1.1h-1zM32 110.4h1v1.1h-1zM37 110.4h3v1.1h-3zM17 114.4h1v1.1h-1zM22 114.4h1v1.1h-1zM24 114.4h1v1.1h-1zM31 114.4h3v1.1h-3zM1 116.4h1v1.1h-1zM4 116.4h1v1.1h-1zM0 122.4h2v1.1h-2zM5 122.4h1v1.1h-1zM20 122.4h1v1.1h-1zM22 122.4h1v1.1h-1zM26 122.4h1v1.1h-1zM29 124.4h1v1.1h-1zM31 124.4h1v1.1h-1zM35 124.4h1v1.1h-1z" fill="#267f99" fill-opacity="0.75"/><path d="M6 0.4h1v1.1h-1zM6 4.4h1v1.1h-1zM5 8.4h1v1.1h-1zM25 8.4h1v1.1h-1zM51 20.4h1v1.1h-1zM21 28.4h1v1.1h-1zM21 36.4h1v1.1h-1zM21 40.4h1v1.1h-1zM5 42.4h1v1.1h-1zM20 48.4h1v1.1h-1zM5 54.4h1v1.1h-1zM51 56.4h1v1.1h-1zM5 84.4h1v1.1h-1zM16 88.4h2v1.1h-2zM21 88.4h1v1.1h-1zM30 88.4h1v1.1h-1zM40 88.4h1v1.1h-1zM28 96.4h1v1.1h-1zM43 96.4h1v1.1h-1zM49 96.4h1v1.1h-1zM60 96.4h3v1.1h-3zM63 98.4h1v1.1h-1zM69 98.4h1v1.1h-1zM50 100.4h1v1.1h-1zM58 100.4h1v1.1h-1zM66 100.4h1v1.1h-1zM72 100.4h1v1.1h-1zM16 104.4h2v1.1h-2zM21 104.4h1v1.1h-1zM27 104.4h1v1.1h-1zM16 110.4h2v1.1h-2zM21 110.4h1v1.1h-1zM26 110.4h1v1.1h-1zM36 110.4h1v1.1h-1zM16 114.4h1v1.1h-1zM23 114.4h1v1.1h-1zM30 114.4h1v1.1h-1zM7 122.4h2v1.1h-2zM12 122.4h1v1.1h-1zM24 122.4h1v1.1h-1zM16 124.4h2v1.1h-2zM21 124.4h1v1.1h-1zM33 124.4h1v1.1h-1z" fill="#267f99" fill-opacity="0.45"/><path d="M8 2.4h1v1.1h-1zM8 6.4h1v1.1h-1zM8 118.4h1v1.1h-1zM8 124.4h1v1.1h-1z" fill="#0000ff" fill-opacity="0.20"/><path d="M9 2.4h1v1.1h-1zM9 6.4h1v1.1h-1zM11 10.4h1v1.1h-1zM11 12.4h1v1.1h-1zM10 14.4h1v1.1h-1zM11 18.4h1v1.1h-1zM11 20.4h1v1.1h-1zM9 22.4h1v1.1h-1zM12 22.4h5v1.1h-5zM11 30.4h1v1.1h-1zM14 30.4h1v1.1h-1zM16 30.4h1v1.1h-1zM15 34.4h1v1.1h-1zM9 36.4h1v1.1h-1zM12 38.4h1v1.1h-1zM14 38.4h1v1.1h-1zM10 48.4h2v1.1h-2zM11 58.4h1v1.1h-1zM13 58.4h2v1.1h-2zM11 60.4h1v1.1h-1zM10 62.4h2v1.1h-2zM9 64.4h1v1.1h-1zM11 66.4h1v1.1h-1zM14 66.4h1v1.1h-1zM16 66.4h1v1.1h-1zM11 68.4h1v1.1h-1zM13 68.4h2v1.1h-2zM11 70.4h1v1.1h-1zM14 70.4h1v1.1h-1zM16 70.4h1v1.1h-1zM9 74.4h2v1.1h-2zM10 80.4h1v1.1h-1zM10 88.4h2v1.1h-2zM8 92.4h1v1.1h-1zM10 96.4h2v1.1h-2zM10 104.4h2v1.1h-2zM10 110.4h2v1.1h-2zM10 114.4h2v1.1h-2zM12 124.4h1v1.1h-1z" fill="#0000ff" fill-opacity="0.60"/><path d="M10 2.4h3v1.1h-3zM10 6.4h3v1.1h-3zM8 10.4h3v1.1h-3zM8 12.4h3v1.1h-3zM8 14.4h2v1.1h-2zM8 16.4h7v1.1h-7zM8 18.4h3v1.1h-3zM12 18.4h2v1.1h-2zM8 20.4h3v1.1h-3zM12 20.4h2v1.1h-2zM8 22.4h1v1.1h-1zM10 22.4h2v1.1h-2zM17 22.4h2v1.1h-2zM8 24.4h6v1.1h-6zM8 26.4h8v1.1h-8zM8 28.4h2v1.1h-2zM8 30.4h3v1.1h-3zM12 30.4h2v1.1h-2zM15 30.4h1v1.1h-1zM8 32.4h6v1.1h-6zM8 34.4h7v1.1h-7zM8 36.4h1v1.1h-1zM8 38.4h4v1.1h-4zM13 38.4h1v1.1h-1zM8 40.4h3v1.1h-3zM8 44.4h7v1.1h-7zM8 46.4h6v1.1h-6zM8 48.4h2v1.1h-2zM8 50.4h7v1.1h-7zM8 52.4h6v1.1h-6zM8 56.4h6v1.1h-6zM8 58.4h3v1.1h-3zM12 58.4h1v1.1h-1zM15 58.4h2v1.1h-2zM8 60.4h3v1.1h-3zM12 60.4h2v1.1h-2zM8 62.4h2v1.1h-2zM12 62.4h2v1.1h-2zM8 64.4h1v1.1h-1zM10 64.4h4v1.1h-4zM8 66.4h3v1.1h-3zM12 66.4h2v1.1h-2zM15 66.4h1v1.1h-1zM8 68.4h3v1.1h-3zM12 68.4h1v1.1h-1zM15 68.4h2v1.1h-2zM8 70.4h3v1.1h-3zM12 70.4h2v1.1h-2zM15 70.4h1v1.1h-1zM8 72.4h7v1.1h-7zM8 74.4h1v1.1h-1zM8 76.4h3v1.1h-3zM8 78.4h3v1.1h-3zM8 80.4h2v1.1h-2zM8 86.4h3v1.1h-3zM8 88.4h2v1.1h-2zM8 90.4h3v1.1h-3zM9 92.4h2v1.1h-2zM8 94.4h3v1.1h-3zM8 96.4h2v1.1h-2zM8 98.4h3v1.1h-3zM8 100.4h3v1.1h-3zM8 102.4h3v1.1h-3zM8 104.4h2v1.1h-2zM8 106.4h3v1.1h-3zM8 108.4h3v1.1h-3zM8 110.4h2v1.1h-2zM8 112.4h3v1.1h-3zM8 114.4h2v1.1h-2zM9 118.4h5v1.1h-5zM9 124.4h3v1.1h-3z" fill="#0000ff" fill-opacity="0.44"/><path d="M16 2.4h1v1.1h-1zM19 2.4h7v1.1h-7zM16 6.4h1v1.1h-1zM18 6.4h8v1.1h-8z" fill="#3030c0" fill-opacity="0.75"/><path d="M17 2.4h2v1.1h-2zM17 6.4h1v1.1h-1z" fill="#3030c0" fill-opacity="0.55"/><path d="M48 2.4h1v1.1h-1zM56 2.4h1v1.1h-1zM48 6.4h1v1.1h-1zM56 6.4h1v1.1h-1zM56 8.4h1v1.1h-1zM58 8.4h1v1.1h-1zM64 8.4h1v1.1h-1zM48 22.4h1v1.1h-1zM55 22.4h1v1.1h-1zM57 22.4h1v1.1h-1zM63 22.4h1v1.1h-1zM69 22.4h1v1.1h-1zM71 22.4h1v1.1h-1zM48 44.4h1v1.1h-1zM51 44.4h1v1.1h-1zM48 46.4h1v1.1h-1zM51 46.4h1v1.1h-1zM48 50.4h1v1.1h-1zM51 50.4h1v1.1h-1zM48 52.4h1v1.1h-1zM51 52.4h1v1.1h-1zM42 70.4h1v1.1h-1zM49 70.4h1v1.1h-1zM59 70.4h1v1.1h-1zM65 70.4h1v1.1h-1z" fill="#387d2c" fill-opacity="0.45"/><path d="M50 2.4h2v1.1h-2zM54 2.4h1v1.1h-1zM57 2.4h1v1.1h-1zM50 6.4h2v1.1h-2zM54 6.4h1v1.1h-1zM57 6.4h1v1.1h-1zM61 8.4h1v1.1h-1zM65 8.4h2v1.1h-2zM69 8.4h1v1.1h-1zM72 8.4h1v1.1h-1zM53 22.4h1v1.1h-1zM61 22.4h1v1.1h-1zM68 22.4h1v1.1h-1zM50 44.4h1v1.1h-1zM52 44.4h1v1.1h-1zM54 44.4h1v1.1h-1zM57 44.4h1v1.1h-1zM60 44.4h2v1.1h-2zM50 46.4h1v1.1h-1zM52 46.4h1v1.1h-1zM54 46.4h1v1.1h-1zM57 46.4h1v1.1h-1zM60 46.4h2v1.1h-2zM50 50.4h1v1.1h-1zM52 50.4h1v1.1h-1zM54 50.4h1v1.1h-1zM57 50.4h1v1.1h-1zM59 50.4h1v1.1h-1zM62 50.4h1v1.1h-1zM50 52.4h1v1.1h-1zM52 52.4h1v1.1h-1zM54 52.4h1v1.1h-1zM57 52.4h1v1.1h-1zM59 52.4h1v1.1h-1zM62 52.4h1v1.1h-1zM47 70.4h1v1.1h-1zM54 70.4h1v1.1h-1zM60 70.4h1v1.1h-1zM62 70.4h1v1.1h-1zM64 70.4h1v1.1h-1z" fill="#387d2c" fill-opacity="0.75"/><path d="M52 2.4h2v1.1h-2zM52 6.4h2v1.1h-2zM59 8.4h2v1.1h-2zM62 8.4h2v1.1h-2zM67 8.4h2v1.1h-2zM50 22.4h3v1.1h-3zM58 22.4h3v1.1h-3zM65 22.4h3v1.1h-3zM53 44.4h1v1.1h-1zM55 44.4h1v1.1h-1zM58 44.4h2v1.1h-2zM53 46.4h1v1.1h-1zM55 46.4h1v1.1h-1zM58 46.4h2v1.1h-2zM53 50.4h1v1.1h-1zM55 50.4h1v1.1h-1zM58 50.4h1v1.1h-1zM60 50.4h2v1.1h-2zM53 52.4h1v1.1h-1zM55 52.4h1v1.1h-1zM58 52.4h1v1.1h-1zM60 52.4h2v1.1h-2zM44 70.4h3v1.1h-3zM51 70.4h3v1.1h-3zM56 70.4h3v1.1h-3z" fill="#387d2c" fill-opacity="0.55"/><path d="M0 8.4h2v1.1h-2zM3 8.4h2v1.1h-2zM8 8.4h2v1.1h-2zM15 8.4h2v1.1h-2zM22 8.4h2v1.1h-2zM29 20.4h3v1.1h-3zM34 20.4h1v1.1h-1zM36 20.4h1v1.1h-1zM16 44.4h6v1.1h-6zM24 44.4h1v1.1h-1zM26 44.4h1v1.1h-1zM17 46.4h3v1.1h-3zM22 46.4h1v1.1h-1zM24 46.4h1v1.1h-1zM16 48.4h3v1.1h-3zM22 50.4h6v1.1h-6zM30 50.4h1v1.1h-1zM32 50.4h1v1.1h-1zM23 52.4h3v1.1h-3zM28 52.4h1v1.1h-1zM30 52.4h1v1.1h-1zM29 56.4h3v1.1h-3zM34 56.4h1v1.1h-1zM36 56.4h1v1.1h-1zM18 88.4h3v1.1h-3zM22 88.4h1v1.1h-1zM25 88.4h3v1.1h-3zM29 88.4h1v1.1h-1zM31 88.4h5v1.1h-5zM37 88.4h3v1.1h-3zM31 92.4h1v1.1h-1zM33 92.4h1v1.1h-1zM16 96.4h1v1.1h-1zM21 96.4h3v1.1h-3zM25 96.4h3v1.1h-3zM29 96.4h5v1.1h-5zM36 96.4h3v1.1h-3zM40 96.4h3v1.1h-3zM44 96.4h5v1.1h-5zM50 96.4h1v1.1h-1zM52 96.4h2v1.1h-2zM55 96.4h4v1.1h-4zM21 98.4h4v1.1h-4zM27 98.4h1v1.1h-1zM29 98.4h1v1.1h-1zM39 98.4h5v1.1h-5zM45 98.4h1v1.1h-1zM48 98.4h2v1.1h-2zM51 98.4h1v1.1h-1zM56 98.4h3v1.1h-3zM60 98.4h3v1.1h-3zM64 98.4h5v1.1h-5zM21 100.4h4v1.1h-4zM27 100.4h1v1.1h-1zM29 100.4h1v1.1h-1zM38 100.4h1v1.1h-1zM43 100.4h3v1.1h-3zM47 100.4h3v1.1h-3zM51 100.4h5v1.1h-5zM59 100.4h3v1.1h-3zM63 100.4h3v1.1h-3zM67 100.4h5v1.1h-5zM18 104.4h3v1.1h-3zM24 104.4h3v1.1h-3zM18 110.4h3v1.1h-3zM23 110.4h3v1.1h-3zM27 110.4h5v1.1h-5zM33 110.4h3v1.1h-3zM18 114.4h4v1.1h-4zM25 114.4h5v1.1h-5zM3 116.4h1v1.1h-1zM5 116.4h1v1.1h-1zM3 122.4h2v1.1h-2zM9 122.4h3v1.1h-3zM13 122.4h7v1.1h-7zM21 122.4h1v1.1h-1zM23 122.4h1v1.1h-1zM25 122.4h1v1.1h-1zM18 124.4h3v1.1h-3zM22 124.4h7v1.1h-7zM30 124.4h1v1.1h-1zM32 124.4h1v1.1h-1zM34 124.4h1v1.1h-1z" fill="#267f99" fill-opacity="0.55"/><path d="M70 8.4h1v1.1h-1zM55 70.4h1v1.1h-1zM61 70.4h1v1.1h-1zM63 70.4h1v1.1h-1z" fill="#387d2c" fill-opacity="0.25"/><path d="M16 10.4h1v1.1h-1zM16 12.4h1v1.1h-1zM18 12.4h1v1.1h-1zM16 14.4h3v1.1h-3zM16 16.4h3v1.1h-3zM22 16.4h3v1.1h-3zM16 18.4h3v1.1h-3zM22 18.4h3v1.1h-3zM28 18.4h3v1.1h-3zM16 20.4h3v1.1h-3zM22 20.4h3v1.1h-3zM39 20.4h3v1.1h-3zM24 22.4h3v1.1h-3zM30 22.4h3v1.1h-3zM36 22.4h3v1.1h-3zM16 24.4h3v1.1h-3zM22 24.4h3v1.1h-3zM28 24.4h3v1.1h-3zM24 26.4h3v1.1h-3zM30 26.4h3v1.1h-3zM24 30.4h3v1.1h-3zM30 30.4h3v1.1h-3zM36 30.4h3v1.1h-3zM16 32.4h3v1.1h-3zM22 32.4h3v1.1h-3zM28 32.4h3v1.1h-3zM24 34.4h3v1.1h-3zM30 34.4h3v1.1h-3zM16 38.4h3v1.1h-3zM22 38.4h3v1.1h-3zM28 38.4h3v1.1h-3zM29 44.4h3v1.1h-3zM35 44.4h3v1.1h-3zM27 46.4h3v1.1h-3zM38 46.4h3v1.1h-3zM16 50.4h3v1.1h-3zM35 50.4h3v1.1h-3zM16 52.4h3v1.1h-3zM33 52.4h3v1.1h-3zM16 56.4h3v1.1h-3zM22 56.4h3v1.1h-3zM39 56.4h3v1.1h-3zM24 58.4h3v1.1h-3zM30 58.4h3v1.1h-3zM36 58.4h3v1.1h-3zM16 60.4h3v1.1h-3zM22 60.4h3v1.1h-3zM28 60.4h3v1.1h-3zM16 62.4h3v1.1h-3zM22 62.4h3v1.1h-3zM28 62.4h3v1.1h-3zM16 64.4h3v1.1h-3zM22 64.4h3v1.1h-3zM28 64.4h3v1.1h-3zM24 66.4h3v1.1h-3zM30 66.4h3v1.1h-3zM36 66.4h3v1.1h-3zM24 68.4h3v1.1h-3zM30 68.4h3v1.1h-3zM36 68.4h3v1.1h-3zM24 70.4h3v1.1h-3zM30 70.4h3v1.1h-3zM36 70.4h3v1.1h-3zM16 72.4h3v1.1h-3zM22 72.4h3v1.1h-3zM16 74.4h3v1.1h-3zM16 76.4h1v1.1h-1zM18 76.4h1v1.1h-1zM16 78.4h1v1.1h-1zM16 86.4h1v1.1h-1zM18 86.4h1v1.1h-1zM16 90.4h1v1.1h-1zM18 90.4h1v1.1h-1zM21 90.4h3v1.1h-3zM16 92.4h3v1.1h-3zM22 92.4h3v1.1h-3zM16 94.4h1v1.1h-1zM18 94.4h1v1.1h-1zM21 94.4h3v1.1h-3zM16 98.4h3v1.1h-3zM32 98.4h3v1.1h-3zM16 100.4h1v1.1h-1zM18 100.4h1v1.1h-1zM32 100.4h3v1.1h-3zM16 102.4h1v1.1h-1zM18 102.4h1v1.1h-1zM21 102.4h1v1.1h-1zM23 102.4h1v1.1h-1zM16 106.4h1v1.1h-1zM21 106.4h3v1.1h-3zM16 108.4h1v1.1h-1zM18 108.4h1v1.1h-1zM21 108.4h1v1.1h-1zM23 108.4h1v1.1h-1zM16 112.4h1v1.1h-1zM18 112.4h1v1.1h-1zM21 112.4h1v1.1h-1z" fill="#4864aa" fill-opacity="0.55"/><path d="M17 10.4h2v1.1h-2zM17 12.4h1v1.1h-1zM19 16.4h1v1.1h-1zM25 16.4h1v1.1h-1zM19 18.4h1v1.1h-1zM25 18.4h1v1.1h-1zM31 18.4h1v1.1h-1zM19 20.4h1v1.1h-1zM25 20.4h1v1.1h-1zM27 22.4h1v1.1h-1zM33 22.4h1v1.1h-1zM39 22.4h1v1.1h-1zM19 24.4h1v1.1h-1zM25 24.4h1v1.1h-1zM31 24.4h1v1.1h-1zM27 26.4h1v1.1h-1zM33 26.4h1v1.1h-1zM27 30.4h1v1.1h-1zM33 30.4h1v1.1h-1zM39 30.4h1v1.1h-1zM19 32.4h1v1.1h-1zM25 32.4h1v1.1h-1zM31 32.4h1v1.1h-1zM27 34.4h1v1.1h-1zM33 34.4h1v1.1h-1zM19 38.4h1v1.1h-1zM25 38.4h1v1.1h-1zM31 38.4h1v1.1h-1zM38 44.4h1v1.1h-1zM41 46.4h1v1.1h-1zM19 50.4h1v1.1h-1zM19 52.4h1v1.1h-1zM19 56.4h1v1.1h-1zM25 56.4h1v1.1h-1zM27 58.4h1v1.1h-1zM33 58.4h1v1.1h-1zM39 58.4h1v1.1h-1zM19 60.4h1v1.1h-1zM25 60.4h1v1.1h-1zM31 60.4h1v1.1h-1zM19 62.4h1v1.1h-1zM25 62.4h1v1.1h-1zM31 62.4h1v1.1h-1zM19 64.4h1v1.1h-1zM25 64.4h1v1.1h-1zM31 64.4h1v1.1h-1zM27 66.4h1v1.1h-1zM33 66.4h1v1.1h-1zM39 66.4h1v1.1h-1zM27 68.4h1v1.1h-1zM33 68.4h1v1.1h-1zM39 68.4h1v1.1h-1zM27 70.4h1v1.1h-1zM33 70.4h1v1.1h-1zM39 70.4h1v1.1h-1zM19 72.4h1v1.1h-1zM25 72.4h1v1.1h-1zM17 76.4h1v1.1h-1zM17 78.4h2v1.1h-2zM17 86.4h1v1.1h-1zM17 90.4h1v1.1h-1zM17 94.4h1v1.1h-1zM17 100.4h1v1.1h-1zM17 102.4h1v1.1h-1zM22 102.4h1v1.1h-1zM17 106.4h2v1.1h-2zM17 108.4h1v1.1h-1zM22 108.4h1v1.1h-1zM17 112.4h1v1.1h-1zM22 112.4h2v1.1h-2z" fill="#4864aa" fill-opacity="0.75"/><path d="M19 14.4h1v1.1h-1zM20 16.4h1v1.1h-1zM20 18.4h1v1.1h-1zM26 18.4h1v1.1h-1zM20 20.4h1v1.1h-1zM26 20.4h1v1.1h-1zM28 22.4h1v1.1h-1zM34 22.4h1v1.1h-1zM20 24.4h1v1.1h-1zM26 24.4h1v1.1h-1zM28 26.4h1v1.1h-1zM28 30.4h1v1.1h-1zM34 30.4h1v1.1h-1zM20 32.4h1v1.1h-1zM26 32.4h1v1.1h-1zM28 34.4h1v1.1h-1zM20 38.4h1v1.1h-1zM26 38.4h1v1.1h-1zM33 44.4h1v1.1h-1zM36 46.4h1v1.1h-1zM20 50.4h1v1.1h-1zM20 52.4h1v1.1h-1zM20 56.4h1v1.1h-1zM26 56.4h1v1.1h-1zM28 58.4h1v1.1h-1zM34 58.4h1v1.1h-1zM20 60.4h1v1.1h-1zM26 60.4h1v1.1h-1zM20 62.4h1v1.1h-1zM26 62.4h1v1.1h-1zM20 64.4h1v1.1h-1zM26 64.4h1v1.1h-1zM28 66.4h1v1.1h-1zM34 66.4h1v1.1h-1zM28 68.4h1v1.1h-1zM34 68.4h1v1.1h-1zM28 70.4h1v1.1h-1zM34 70.4h1v1.1h-1zM40 70.4h1v1.1h-1zM20 72.4h1v1.1h-1zM19 74.4h1v1.1h-1zM19 86.4h1v1.1h-1zM19 90.4h1v1.1h-1zM19 92.4h1v1.1h-1zM19 94.4h1v1.1h-1zM19 98.4h1v1.1h-1zM19 100.4h1v1.1h-1zM19 102.4h1v1.1h-1zM19 106.4h1v1.1h-1zM19 108.4h1v1.1h-1zM19 112.4h1v1.1h-1z" fill="#000" fill-opacity="0.25"/><path d="M21 14.4h2v1.1h-2zM33 46.4h2v1.1h-2zM39 52.4h2v1.1h-2zM21 74.4h2v1.1h-2zM21 86.4h2v1.1h-2z" fill="#098658" fill-opacity="0.75"/><path d="M38 20.4h1v1.1h-1zM43 20.4h1v1.1h-1zM53 20.4h1v1.1h-1zM28 44.4h1v1.1h-1zM32 44.4h1v1.1h-1zM26 46.4h1v1.1h-1zM31 46.4h1v1.1h-1zM35 46.4h1v1.1h-1zM34 50.4h1v1.1h-1zM38 50.4h1v1.1h-1zM32 52.4h1v1.1h-1zM37 52.4h1v1.1h-1zM41 52.4h1v1.1h-1zM38 56.4h1v1.1h-1zM43 56.4h1v1.1h-1zM53 56.4h1v1.1h-1zM21 92.4h1v1.1h-1zM26 92.4h1v1.1h-1zM34 92.4h1v1.1h-1zM31 98.4h1v1.1h-1zM36 98.4h1v1.1h-1zM31 100.4h1v1.1h-1zM36 100.4h1v1.1h-1z" fill="#000" fill-opacity="0.45"/><path d="M16 118.4h1v1.1h-1zM30 118.4h1v1.1h-1z" fill="#a31515" fill-opacity="0.45"/><path d="M17 118.4h2v1.1h-2zM20 118.4h3v1.1h-3zM25 118.4h3v1.1h-3zM29 118.4h1v1.1h-1z" fill="#a31515" fill-opacity="0.55"/><path d="M23 118.4h1v1.1h-1zM28 118.4h1v1.1h-1z" fill="#a31515" fill-opacity="0.75"/></svg>
<div class="a" style="left:1903px;top:176px;width:73px;height:2px;background:#c5d8f5;opacity:.6"></div>
</body></html>
